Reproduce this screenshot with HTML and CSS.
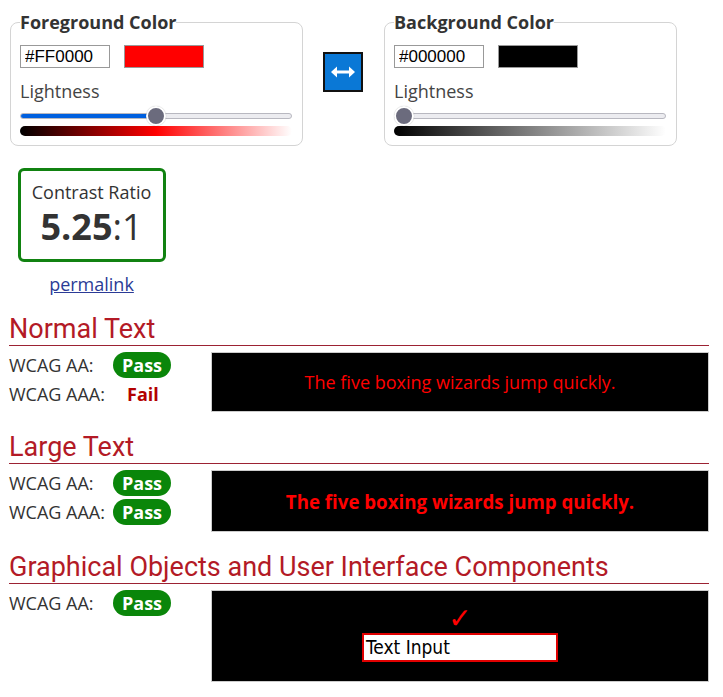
FILE: index.html
```html
<!DOCTYPE html>
<html lang="en">
<head>
<meta charset="utf-8">
<title>Contrast Checker</title>
<link rel="stylesheet" href="styles.css">
</head>
<body>
<div class="pickers">
  <fieldset class="picker">
    <legend>Foreground Color</legend>
    <div class="color-row">
      <input class="hex" type="text" value="#FF0000">
      <span class="swatch swatch-fg"></span>
    </div>
    <div class="light-label">Lightness</div>
    <div class="slider">
      <div class="track"><div class="fill" style="width:50%"></div></div>
      <div class="thumb" style="left:50%"></div>
    </div>
    <div class="gradient gradient-fg"></div>
  </fieldset>
  <div class="swap-wrap">
    <button class="swap" type="button" aria-label="Swap colors">
      <svg width="24" height="12" viewBox="0 0 24 12" aria-hidden="true">
        <path d="M5 6 H19" stroke="#fff" stroke-width="3"/>
        <path d="M0 6 L6 0.5 V11.5 Z" fill="#fff"/>
        <path d="M24 6 L18 0.5 V11.5 Z" fill="#fff"/>
      </svg>
    </button>
  </div>
  <fieldset class="picker">
    <legend>Background Color</legend>
    <div class="color-row">
      <input class="hex" type="text" value="#000000">
      <span class="swatch swatch-bg"></span>
    </div>
    <div class="light-label">Lightness</div>
    <div class="slider">
      <div class="track"><div class="fill" style="width:0%"></div></div>
      <div class="thumb thumb-start" style="left:0%"></div>
    </div>
    <div class="gradient gradient-bg"></div>
  </fieldset>
</div>

<div class="ratio-wrap">
  <div class="ratio-box">
    <div class="ratio-title">Contrast Ratio</div>
    <div class="ratio-value"><b>5.25</b>:1</div>
  </div>
  <a class="permalink" href="#">permalink</a>
</div>

<section class="result result-first">
  <h2>Normal Text</h2>
  <div class="result-body">
    <div class="checks">
      <div class="check"><span class="label">WCAG AA:</span><span class="badge pass">Pass</span></div>
      <div class="check"><span class="label">WCAG AAA:</span><span class="badge fail">Fail</span></div>
    </div>
    <div class="sample sample-normal">The five boxing wizards jump quickly.</div>
  </div>
</section>

<section class="result">
  <h2>Large Text</h2>
  <div class="result-body">
    <div class="checks">
      <div class="check"><span class="label">WCAG AA:</span><span class="badge pass">Pass</span></div>
      <div class="check"><span class="label">WCAG AAA:</span><span class="badge pass">Pass</span></div>
    </div>
    <div class="sample sample-large">The five boxing wizards jump quickly.</div>
  </div>
</section>

<section class="result">
  <h2>Graphical Objects and User Interface Components</h2>
  <div class="result-body">
    <div class="checks">
      <div class="check"><span class="label">WCAG AA:</span><span class="badge pass">Pass</span></div>
    </div>
    <div class="sample sample-ui">
      <span class="check-mark">✓</span>
      <div class="ui-input">Text Input</div>
    </div>
  </div>
</section>
</body>
</html>
```

FILE: styles.css
```css
html, body {
  background: #fff;
}
body {
  margin: 0;
  padding: 0 14px 0 8px;
  font-family: "Open Sans", sans-serif;
  font-size: 18px;
  color: #333;
}

.pickers {
  display: flex;
  align-items: flex-start;
  margin-top: 10px;
}
.picker {
  margin: 0 0 0 2px;
  width: 293px;
  box-sizing: border-box;
  border: 1px solid #d4d4d4;
  border-radius: 8px;
  padding: 11px 10px 9px 9px;
}
.swap-wrap + .picker {
  margin-left: 0;
}
.picker legend {
  padding: 0;
  font-weight: bold;
  font-size: 18px;
  line-height: 24px;
  color: #333;
}
.color-row {
  display: flex;
  align-items: center;
  gap: 14px;
}
.hex {
  width: 90px;
  height: 23px;
  box-sizing: border-box;
  border: 1px solid #999;
  padding: 0 4px;
  font-family: "Liberation Sans", Arial, sans-serif;
  font-size: 17px;
  color: #000;
  margin: 0;
}
.swatch {
  display: block;
  width: 80px;
  height: 23px;
  box-sizing: border-box;
  border: 1px solid #999;
}
.swatch-fg { background: #ff0000; }
.swatch-bg { background: #000000; }
.light-label {
  margin-top: 10px;
  line-height: 26px;
  color: #444;
}
.slider {
  position: relative;
  margin-top: 2px;
  height: 20px;
}
.track {
  position: absolute;
  left: 0;
  right: 0;
  top: 7px;
  height: 6px;
  box-sizing: border-box;
  border: 1px solid #b8b8c0;
  border-radius: 3px;
  background: #ececf0;
  overflow: hidden;
}
.fill {
  height: 100%;
  background: #0060df;
}
.thumb {
  position: absolute;
  top: 0;
  width: 20px;
  height: 20px;
  margin-left: -10px;
  border-radius: 50%;
  box-sizing: border-box;
  border: 2px solid #fff;
  background: #6b6b7d;
  box-shadow: 0 0 1px rgba(0,0,0,0.3);
}
.thumb-start {
  margin-left: 0;
}
.gradient {
  margin-top: 0;
  height: 10px;
  border-radius: 5px;
}
.gradient-fg {
  background: linear-gradient(to right, #000 0%, #ff0000 50%, #fff 100%);
}
.gradient-bg {
  background: linear-gradient(to right, #000 0%, #fff 100%);
}

.swap-wrap {
  padding: 42px 21px 0 20px;
}
.swap {
  display: flex;
  align-items: center;
  justify-content: center;
  width: 40px;
  height: 40px;
  padding: 0;
  box-sizing: border-box;
  background: #0a78d6;
  border: 2px solid #111;
  cursor: pointer;
}

.ratio-wrap {
  width: 147px;
  margin: 22px 0 0 10px;
  display: flex;
  flex-direction: column;
  align-items: center;
}
.ratio-box {
  width: 148px;
  height: 94px;
  box-sizing: border-box;
  border: 3px solid #118211;
  border-radius: 6px;
  text-align: center;
  padding-top: 9px;
}
.ratio-title {
  line-height: 24px;
  color: #333;
}
.ratio-value {
  font-size: 36px;
  line-height: 46px;
  color: #333;
}
.ratio-value b {
  font-weight: bold;
}
.permalink {
  margin-top: 10px;
  color: #2b3b96;
  line-height: 24px;
  text-decoration: underline;
}

.result h2 {
  margin: 20px 0 0 1px;
  font-family: Roboto, sans-serif;
  font-weight: normal;
  font-size: 27px;
  line-height: 30px;
  color: #b31a26;
  padding-bottom: 1px;
  border-bottom: 1px solid #9c2233;
}
.result-first h2 {
  margin-top: 18px;
}
.result-body {
  display: grid;
  grid-template-columns: 202px 1fr;
  margin-top: 6px;
  padding-left: 1px;
}
.checks {
  display: flex;
  flex-direction: column;
  gap: 3px;
}
.check {
  display: flex;
  align-items: center;
  height: 26px;
}
.label {
  width: 104px;
  color: #333;
}
.badge {
  font-weight: bold;
  font-size: 18px;
  line-height: 26px;
  height: 26px;
}
.pass {
  background: #0a860a;
  color: #fff;
  border-radius: 13px;
  padding: 0 9px;
}
.fail {
  color: #b30000;
  padding: 0 14px;
}
.sample {
  background: #000;
  border: 1px solid #ccc;
  display: flex;
  align-items: center;
  justify-content: center;
  color: #ff0000;
}
.sample-normal {
  height: 60px;
  box-sizing: border-box;
}
.sample-large {
  height: 62px;
  box-sizing: border-box;
  font-weight: bold;
  font-size: 18.7px;
}
.sample-ui {
  height: 92px;
  box-sizing: border-box;
  flex-direction: column;
  justify-content: flex-start;
  padding-top: 15px;
}
.check-mark {
  color: #ff0000;
  font-family: "DejaVu Sans", sans-serif;
  font-size: 28px;
  line-height: 26px;
}
.ui-input {
  width: 196px;
  height: 29px;
  box-sizing: border-box;
  border: 2px solid #e00000;
  background: #fff;
  color: #000;
  font-family: "DejaVu Sans Condensed", "DejaVu Sans", sans-serif;
  font-size: 19px;
  line-height: 25px;
  padding-left: 2px;
  margin-top: 1px;
}
```
